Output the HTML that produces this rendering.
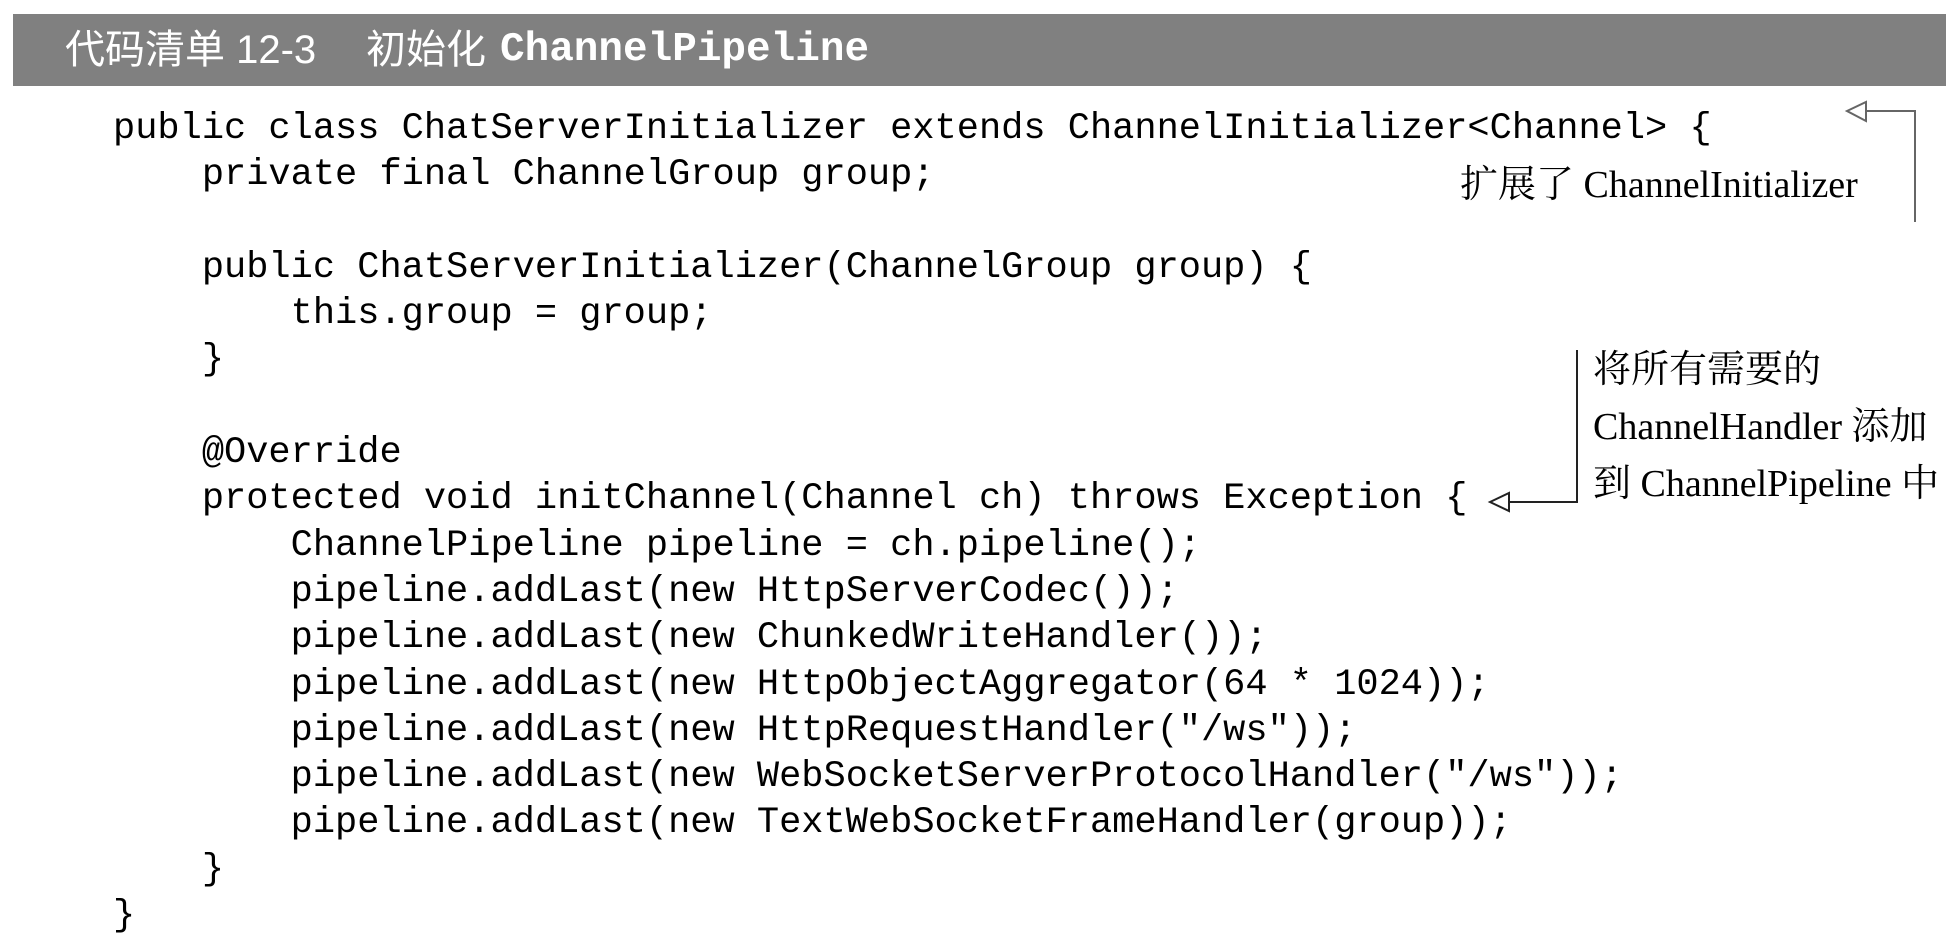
<!DOCTYPE html>
<html><head><meta charset="utf-8"><style>
html,body{margin:0;padding:0;background:#fff;width:1960px;height:940px;overflow:hidden;position:relative}
.bar{position:absolute;left:13px;top:14px;width:1933px;height:72px;background:#808080}
.t{position:absolute;top:14px;height:72px;line-height:72px;color:#fff;white-space:nowrap;font-family:"Liberation Sans","Noto Sans CJK SC",sans-serif;font-size:40px}
.m{font-family:"Liberation Mono",monospace;font-weight:bold;font-size:41px}
pre{position:absolute;left:113px;top:106px;margin:0;font-family:"Liberation Mono",monospace;font-size:37px;line-height:46.3px;color:#000}
.ann{position:absolute;font-family:"Liberation Serif","Noto Serif CJK SC",serif;font-size:38px;color:#000;white-space:nowrap}
</style></head><body>
<div class="bar"></div>
<div class="t" style="left:65px">代码清单 12-3</div>
<div class="t" style="left:366px">初始化</div>
<div class="t m" style="left:500px">ChannelPipeline</div>
<pre>public class ChatServerInitializer extends ChannelInitializer&lt;Channel&gt; {
    private final ChannelGroup group;

    public ChatServerInitializer(ChannelGroup group) {
        this.group = group;
    }

    @Override
    protected void initChannel(Channel ch) throws Exception {
        ChannelPipeline pipeline = ch.pipeline();
        pipeline.addLast(new HttpServerCodec());
        pipeline.addLast(new ChunkedWriteHandler());
        pipeline.addLast(new HttpObjectAggregator(64 * 1024));
        pipeline.addLast(new HttpRequestHandler("/ws"));
        pipeline.addLast(new WebSocketServerProtocolHandler("/ws"));
        pipeline.addLast(new TextWebSocketFrameHandler(group));
    }
}</pre>
<div class="ann" style="left:1460px;top:163px;line-height:44px">扩展了 ChannelInitializer</div>
<div class="ann" style="left:1593px;top:342px;line-height:57px">将所有需要的<br>ChannelHandler 添加<br>到 ChannelPipeline 中</div>
<svg width="1960" height="940" style="position:absolute;left:0;top:0">
<polyline points="1866,111 1915,111 1915,222" fill="none" stroke="#666" stroke-width="2"/>
<polygon points="1847,111 1866,102 1866,121" fill="#fff" stroke="#666" stroke-width="2"/>
<polyline points="1577,350 1577,502 1509,502" fill="none" stroke="#222" stroke-width="2"/>
<polygon points="1490,502 1509,493 1509,511" fill="#fff" stroke="#222" stroke-width="2"/>
</svg>
</body></html>
